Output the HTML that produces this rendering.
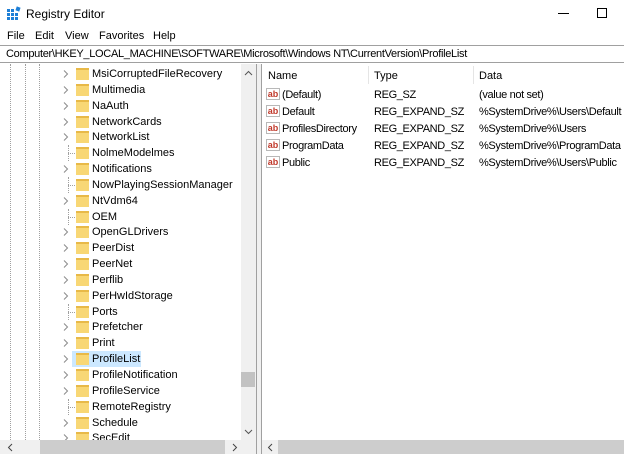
<!DOCTYPE html>
<html><head><style>
*{margin:0;padding:0;box-sizing:border-box}
body{width:624px;height:454px;overflow:hidden;background:#fff;font-family:"Liberation Sans",sans-serif;font-size:11px;color:#000;position:relative}
.a{position:absolute;white-space:nowrap}
.vl{position:absolute;width:0;border-left:1px dotted #a0a0a0}
.row{position:absolute;left:0;height:16px;width:241px}
.row .arr{position:absolute;left:63px;top:4px}
.row .hl{position:absolute;left:68px;top:8px;width:7px;border-top:1px dotted #a0a0a0}
.row .vr{position:absolute;left:68px;top:0;height:16px;border-left:1px dotted #a0a0a0}
.row .fd{position:absolute;left:76px;top:2px;width:13px;height:12px;background:#f8d775;border-top:2px solid #e8b948}
.row .t{position:absolute;left:92px;top:2px}
.ab{position:absolute;left:266px;width:14px;height:12px;border:1px solid #b8b8b8;background:#fff;font-size:9px;color:#c0392b;line-height:10px;text-align:center;font-weight:bold}
.d{letter-spacing:-0.35px}
</style></head><body>
<svg width="0" height="0" style="position:absolute"><defs><symbol id="ch" viewBox="0 0 6 8"><path d="M1 0.5 L4.5 4 L1 7.5" fill="none" stroke="#8a8a8a" stroke-width="1"/></symbol></defs></svg>
<svg class="a" style="left:7px;top:6px" width="15" height="15" viewBox="0 0 15 15"><g fill="#1e7fd6"><rect x="0" y="3" width="3" height="3"/><rect x="4" y="3" width="3" height="3"/><rect x="0" y="7" width="3" height="3"/><rect x="4" y="7" width="3" height="3"/><rect x="8" y="7" width="3" height="3"/><rect x="0" y="11" width="3" height="3"/><rect x="4" y="11" width="3" height="3"/><rect x="8" y="11" width="3" height="3"/><rect x="9" y="1" width="4" height="4" transform="rotate(20 11 3)"/></g></svg>
<div class="a" style="left:26px;top:7px;font-size:12px">Registry Editor</div>
<div class="a" style="left:558px;top:13px;width:11px;border-top:1px solid #000"></div>
<div class="a" style="left:597px;top:8px;width:10px;height:10px;border:1px solid #000"></div>
<div class="a" style="left:7px;top:30px">File</div>
<div class="a" style="left:35px;top:30px">Edit</div>
<div class="a" style="left:65px;top:30px">View</div>
<div class="a" style="left:99px;top:30px">Favorites</div>
<div class="a" style="left:153px;top:30px">Help</div>
<div class="a" style="left:0;top:45px;width:624px;height:18px;border-top:1px solid #a0a0a0;border-bottom:1px solid #a0a0a0"></div>
<div class="a" style="left:6px;top:48px;letter-spacing:-0.3px">Computer\HKEY_LOCAL_MACHINE\SOFTWARE\Microsoft\Windows NT\CurrentVersion\ProfileList</div>
<div class="vl" style="left:10px;top:64px;height:376px"></div>
<div class="vl" style="left:25px;top:64px;height:376px"></div>
<div class="vl" style="left:39px;top:64px;height:376px"></div>
<div style="position:absolute;left:0;top:66px;width:241px;height:374px;overflow:hidden">
<div class="row" style="top:0"><svg class="arr" width="6" height="8"><use href="#ch"/></svg><div class="fd"></div><span class="t">MsiCorruptedFileRecovery</span></div>
<div class="row" style="top:16px"><svg class="arr" width="6" height="8"><use href="#ch"/></svg><div class="fd"></div><span class="t">Multimedia</span></div>
<div class="row" style="top:32px"><svg class="arr" width="6" height="8"><use href="#ch"/></svg><div class="fd"></div><span class="t">NaAuth</span></div>
<div class="row" style="top:48px"><svg class="arr" width="6" height="8"><use href="#ch"/></svg><div class="fd"></div><span class="t">NetworkCards</span></div>
<div class="row" style="top:63px"><svg class="arr" width="6" height="8"><use href="#ch"/></svg><div class="fd"></div><span class="t">NetworkList</span></div>
<div class="row" style="top:79px"><span class="vr"></span><span class="hl"></span><div class="fd"></div><span class="t">NolmeModelmes</span></div>
<div class="row" style="top:95px"><svg class="arr" width="6" height="8"><use href="#ch"/></svg><div class="fd"></div><span class="t">Notifications</span></div>
<div class="row" style="top:111px"><span class="vr"></span><span class="hl"></span><div class="fd"></div><span class="t">NowPlayingSessionManager</span></div>
<div class="row" style="top:127px"><svg class="arr" width="6" height="8"><use href="#ch"/></svg><div class="fd"></div><span class="t">NtVdm64</span></div>
<div class="row" style="top:143px"><span class="vr"></span><span class="hl"></span><div class="fd"></div><span class="t">OEM</span></div>
<div class="row" style="top:158px"><svg class="arr" width="6" height="8"><use href="#ch"/></svg><div class="fd"></div><span class="t">OpenGLDrivers</span></div>
<div class="row" style="top:174px"><svg class="arr" width="6" height="8"><use href="#ch"/></svg><div class="fd"></div><span class="t">PeerDist</span></div>
<div class="row" style="top:190px"><svg class="arr" width="6" height="8"><use href="#ch"/></svg><div class="fd"></div><span class="t">PeerNet</span></div>
<div class="row" style="top:206px"><svg class="arr" width="6" height="8"><use href="#ch"/></svg><div class="fd"></div><span class="t">Perflib</span></div>
<div class="row" style="top:222px"><svg class="arr" width="6" height="8"><use href="#ch"/></svg><div class="fd"></div><span class="t">PerHwIdStorage</span></div>
<div class="row" style="top:238px"><span class="vr"></span><span class="hl"></span><div class="fd"></div><span class="t">Ports</span></div>
<div class="row" style="top:253px"><svg class="arr" width="6" height="8"><use href="#ch"/></svg><div class="fd"></div><span class="t">Prefetcher</span></div>
<div class="row" style="top:269px"><svg class="arr" width="6" height="8"><use href="#ch"/></svg><div class="fd"></div><span class="t">Print</span></div>
<div class="row" style="top:285px"><div style="position:absolute;left:72px;top:0;width:69px;height:16px;background:#cce8ff"></div><svg class="arr" width="6" height="8"><use href="#ch"/></svg><div class="fd"></div><span class="t">ProfileList</span></div>
<div class="row" style="top:301px"><svg class="arr" width="6" height="8"><use href="#ch"/></svg><div class="fd"></div><span class="t">ProfileNotification</span></div>
<div class="row" style="top:317px"><svg class="arr" width="6" height="8"><use href="#ch"/></svg><div class="fd"></div><span class="t">ProfileService</span></div>
<div class="row" style="top:333px"><span class="vr"></span><span class="hl"></span><div class="fd"></div><span class="t">RemoteRegistry</span></div>
<div class="row" style="top:349px"><svg class="arr" width="6" height="8"><use href="#ch"/></svg><div class="fd"></div><span class="t">Schedule</span></div>
<div class="row" style="top:364px"><svg class="arr" width="6" height="8"><use href="#ch"/></svg><div class="fd"></div><span class="t">SecEdit</span></div>
</div>
<div class="a" style="left:241px;top:64px;width:15px;height:376px;background:#f0f0f0"></div>
<svg class="a" style="left:244px;top:70px" width="9" height="6"><path d="M1 5 L4.5 1.5 L8 5" fill="none" stroke="#555"/></svg>
<div class="a" style="left:241px;top:372px;width:14px;height:15px;background:#c2c2c2"></div>
<svg class="a" style="left:244px;top:429px" width="9" height="6"><path d="M1 1 L4.5 4.5 L8 1" fill="none" stroke="#555"/></svg>
<div class="a" style="left:0;top:440px;width:256px;height:14px;background:#f0f0f0"></div>
<div class="a" style="left:40px;top:440px;width:185px;height:14px;background:#cdcdcd"></div>
<svg class="a" style="left:7px;top:443px" width="6" height="9"><path d="M5 1 L1.5 4.5 L5 8" fill="none" stroke="#444"/></svg>
<svg class="a" style="left:232px;top:443px" width="6" height="9"><path d="M1 1 L4.5 4.5 L1 8" fill="none" stroke="#444"/></svg>
<div class="a" style="left:256px;top:64px;width:6px;height:390px;background:#f0f0f0;border-left:1px solid #a0a0a0;border-right:1px solid #a0a0a0"></div>
<div class="a" style="left:268px;top:70px">Name</div>
<div class="vl" style="left:368px;top:66px;height:18px;border-left:1px solid #e5e5e5"></div>
<div class="a" style="left:374px;top:70px">Type</div>
<div class="vl" style="left:473px;top:66px;height:18px;border-left:1px solid #e5e5e5"></div>
<div class="a" style="left:479px;top:70px">Data</div>
<div class="ab" style="top:88px">ab</div><div class="a d" style="left:282px;top:89px">(Default)</div><div class="a d" style="left:374px;top:89px">REG_SZ</div><div class="a d" style="left:479px;top:89px">(value not set)</div>
<div class="ab" style="top:105px">ab</div><div class="a d" style="left:282px;top:106px">Default</div><div class="a d" style="left:374px;top:106px">REG_EXPAND_SZ</div><div class="a d" style="left:479px;top:106px">%SystemDrive%\Users\Default</div>
<div class="ab" style="top:122px">ab</div><div class="a d" style="left:282px;top:123px">ProfilesDirectory</div><div class="a d" style="left:374px;top:123px">REG_EXPAND_SZ</div><div class="a d" style="left:479px;top:123px">%SystemDrive%\Users</div>
<div class="ab" style="top:139px">ab</div><div class="a d" style="left:282px;top:140px">ProgramData</div><div class="a d" style="left:374px;top:140px">REG_EXPAND_SZ</div><div class="a d" style="left:479px;top:140px">%SystemDrive%\ProgramData</div>
<div class="ab" style="top:156px">ab</div><div class="a d" style="left:282px;top:157px">Public</div><div class="a d" style="left:374px;top:157px">REG_EXPAND_SZ</div><div class="a d" style="left:479px;top:157px">%SystemDrive%\Users\Public</div>
<div class="a" style="left:262px;top:440px;width:362px;height:14px;background:#f0f0f0"></div>
<div class="a" style="left:278px;top:440px;width:346px;height:14px;background:#cdcdcd"></div>
<svg class="a" style="left:267px;top:443px" width="6" height="9"><path d="M5 1 L1.5 4.5 L5 8" fill="none" stroke="#444"/></svg>
</body></html>
